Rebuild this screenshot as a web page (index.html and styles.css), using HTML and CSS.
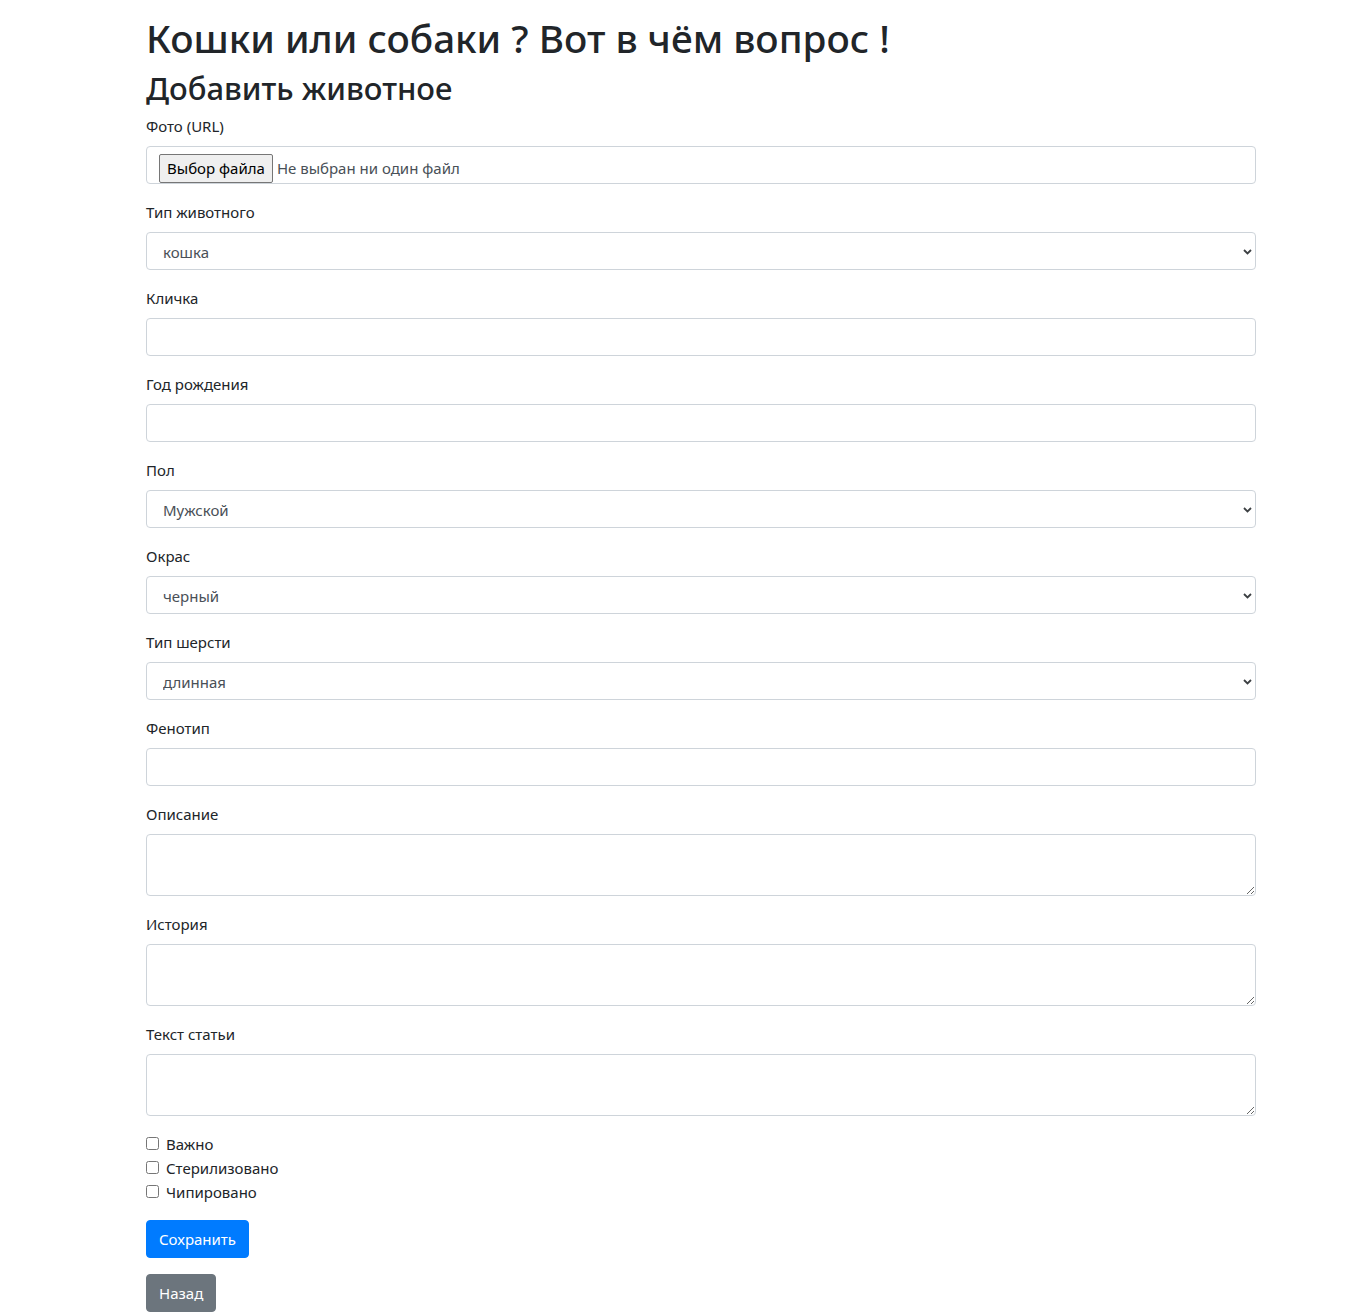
FILE: index.html
```html
<!DOCTYPE html>
<html lang="ru">
<head>
<meta charset="utf-8">
<title>Добавить животное</title>
<link rel="stylesheet" href="styles.css">
</head>
<body>
<div class="container">
  <h1 class="title">Кошки или собаки ? Вот в чём вопрос !</h1>
  <h2 class="subtitle">Добавить животное</h2>
  <form class="form">
    <div class="group">
      <label class="label">Фото (URL)</label>
      <div class="control file">
        <span class="file-btn">Выбор файла</span>
        <span class="file-text">Не выбран ни один файл</span>
      </div>
    </div>
    <div class="group">
      <label class="label">Тип животного</label>
      <div class="select-wrap">
        <select class="control select"><option>кошка</option><option>собака</option></select>
        <svg class="chev" width="9" height="6" viewBox="0 0 9 6"><path d="M1 1 L4.5 4.5 L8 1" fill="none" stroke="#3c4043" stroke-width="1.8"/></svg>
      </div>
    </div>
    <div class="group">
      <label class="label">Кличка</label>
      <input class="control" type="text">
    </div>
    <div class="group">
      <label class="label">Год рождения</label>
      <input class="control" type="text">
    </div>
    <div class="group">
      <label class="label">Пол</label>
      <div class="select-wrap">
        <select class="control select"><option>Мужской</option><option>Женский</option></select>
        <svg class="chev" width="9" height="6" viewBox="0 0 9 6"><path d="M1 1 L4.5 4.5 L8 1" fill="none" stroke="#3c4043" stroke-width="1.8"/></svg>
      </div>
    </div>
    <div class="group">
      <label class="label">Окрас</label>
      <div class="select-wrap">
        <select class="control select"><option>черный</option></select>
        <svg class="chev" width="9" height="6" viewBox="0 0 9 6"><path d="M1 1 L4.5 4.5 L8 1" fill="none" stroke="#3c4043" stroke-width="1.8"/></svg>
      </div>
    </div>
    <div class="group">
      <label class="label">Тип шерсти</label>
      <div class="select-wrap">
        <select class="control select"><option>длинная</option></select>
        <svg class="chev" width="9" height="6" viewBox="0 0 9 6"><path d="M1 1 L4.5 4.5 L8 1" fill="none" stroke="#3c4043" stroke-width="1.8"/></svg>
      </div>
    </div>
    <div class="group">
      <label class="label">Фенотип</label>
      <input class="control" type="text">
    </div>
    <div class="group">
      <label class="label">Описание</label>
      <textarea class="control area" rows="2"></textarea>
    </div>
    <div class="group">
      <label class="label">История</label>
      <textarea class="control area" rows="2"></textarea>
    </div>
    <div class="group">
      <label class="label">Текст статьи</label>
      <textarea class="control area" rows="2"></textarea>
    </div>
    <div class="checks">
      <label class="check"><input type="checkbox" class="box"><span>Важно</span></label>
      <label class="check"><input type="checkbox" class="box"><span>Стерилизовано</span></label>
      <label class="check"><input type="checkbox" class="box"><span>Чипировано</span></label>
    </div>
    <div class="actions">
      <button type="button" class="btn btn-primary">Сохранить</button>
      <button type="button" class="btn btn-secondary">Назад</button>
    </div>
  </form>
</div>
</body>
</html>
```
FILE: styles.css
```css
* { box-sizing: border-box; }
html, body { margin: 0; padding: 0; background: #fff; }
body {
  font-family: "Noto Sans", "Open Sans", "Liberation Sans", sans-serif;
  font-size: 16px;
  line-height: 1.5;
  color: #212529;
  padding-left: 40px;
  padding-top: 12px;
}
.container {
  width: 1140px;
  margin: 0 auto;
  padding: 0 15px;
}
.title {
  font-size: 38.7px;
  font-weight: 500;
  line-height: 48px;
  margin: 0 0 8px;
  padding-top: 2px;
  height: 48px;
}
.subtitle {
  font-size: 31px;
  font-weight: 500;
  line-height: 38px;
  margin: 0 0 8px;
  padding-top: 1px;
  height: 38px;
}
.form { display: flex; flex-direction: column; }
.group { display: flex; flex-direction: column; margin-bottom: 16px; }
.label { display: block; margin-bottom: 8px; font-size: 15px; line-height: 24px; }
.control {
  display: block;
  width: 100%;
  height: 38px;
  padding: 6px 12px;
  font-family: inherit;
  font-size: 15px;
  line-height: 24px;
  color: #495057;
  background: #fff;
  border: 1px solid #ced4da;
  border-radius: 4px;
  margin: 0;
}
.file { display: flex; align-items: center; padding: 0 12px; gap: 4px; }
.file-btn {
  display: inline-flex;
  align-items: center;
  height: 29px;
  padding: 0 7px;
  margin-top: 6px;
  background: #efefef;
  border: 1px solid #767676;
  border-radius: 2px;
  color: #000;
  font-size: 15px;
}
.file-text { color: #495057; font-size: 15px; margin-top: 6px; }
.select-wrap { position: relative; }
.select {
  appearance: none;
  -webkit-appearance: none;
  padding-left: 16px;
  padding-top: 7px;
  padding-bottom: 5px;
}
.chev { position: absolute; right: 4px; top: 17px; pointer-events: none; }
.area { height: 62px; resize: vertical; }
.checks { display: flex; flex-direction: column; margin-bottom: 16px; }
.check { display: flex; align-items: center; gap: 7px; font-size: 15px; line-height: 24px; }
.box { margin: 0; width: 13px; height: 13px; position: relative; top: -1px; }
.actions { display: flex; flex-direction: column; align-items: flex-start; gap: 16px; }
.btn {
  font-family: inherit;
  font-size: 15px;
  line-height: 24px;
  height: 38px;
  padding: 6px 12px;
  border: 1px solid transparent;
  border-radius: 4px;
  color: #fff;
  cursor: pointer;
}
.btn-primary { background: #007bff; border-color: #007bff; }
.btn-secondary { background: #6c757d; border-color: #6c757d; }
```
